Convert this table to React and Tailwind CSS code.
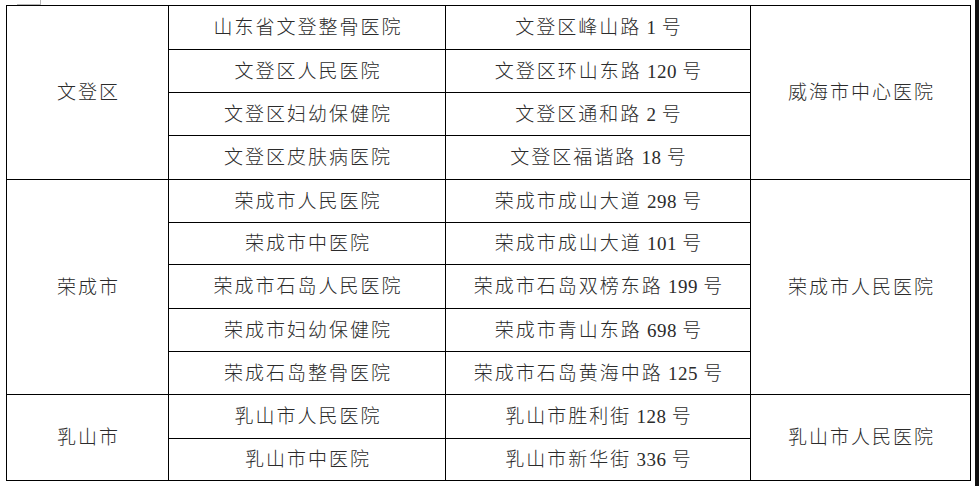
import React from "react";

// hospital list, grouped by district
const groups = [
  {
    area: "文登区",
    span: "row-span-4",
    target: "威海市中心医院",
    rows: [
      ["山东省文登整骨医院", "文登区峰山路", "1"],
      ["文登区人民医院", "文登区环山东路", "120"],
      ["文登区妇幼保健院", "文登区通和路", "2"],
      ["文登区皮肤病医院", "文登区福谐路", "18"],
    ],
  },
  {
    area: "荣成市",
    span: "row-span-5",
    target: "荣成市人民医院",
    rows: [
      ["荣成市人民医院", "荣成市成山大道", "298"],
      ["荣成市中医院", "荣成市成山大道", "101"],
      ["荣成市石岛人民医院", "荣成市石岛双榜东路", "199"],
      ["荣成市妇幼保健院", "荣成市青山东路", "698"],
      ["荣成石岛整骨医院", "荣成市石岛黄海中路", "125"],
    ],
  },
  {
    area: "乳山市",
    span: "row-span-2",
    target: "乳山市人民医院",
    rows: [
      ["乳山市人民医院", "乳山市胜利街", "128"],
      ["乳山市中医院", "乳山市新华街", "336"],
    ],
  },
];

function Cell({ children, className = "" }) {
  return (
    <div
      className={
        "bg-white flex items-center justify-center pl-[2px] " + className
      }
    >
      <span>{children}</span>
    </div>
  );
}

export default function App() {
  return (
    <div
      className="w-[980px] h-[486px] bg-white flex overflow-hidden text-[19px] leading-none tracking-[2px] font-light text-[#2b2b2b]"
      style={{ fontFamily: '"Liberation Serif", "Noto Sans CJK SC", serif' }}
    >
      <div className="flex flex-col">
        {/* table move handle left over from the screenshot */}
        <div className="h-[5px] flex">
          <div className="ml-[17px] w-[24px] h-[5px] border-b border-r border-[#b5b5b5]" />
        </div>
        <div className="ml-[6px] grid grid-cols-[161px_276px_304px_219px] grid-rows-[43px_42px_42px_43px_42px_41px_43px_42px_42px_43px_41px] gap-px p-px bg-black">
          {groups.map((g) => (
            <React.Fragment key={g.area}>
              <Cell className={g.span}>{g.area}</Cell>
              {g.rows.map((r, i) => (
                <React.Fragment key={r[0]}>
                  <Cell>{r[0]}</Cell>
                  <Cell>
                    {r[1]}
                    <span className="tracking-[0.5px]"> {r[2]} </span>号
                  </Cell>
                  {i === 0 && <Cell className={g.span}>{g.target}</Cell>}
                </React.Fragment>
              ))}
            </React.Fragment>
          ))}
        </div>
      </div>
      <div className="ml-[4px] w-[4px] bg-[#111]" />
    </div>
  );
}
